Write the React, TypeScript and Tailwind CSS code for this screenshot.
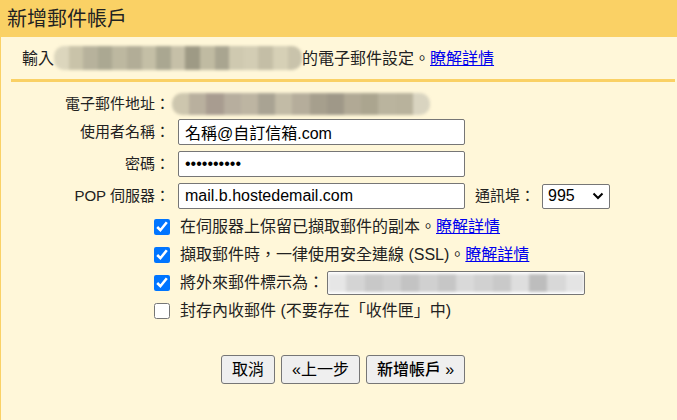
import React from "react";

function Blur({ className, colors }: { className: string; colors: string[] }) {
  return (
    <div className={"relative shrink-0 " + className}>
      <div className="absolute inset-0 flex overflow-hidden rounded-[10px] blur-[1.5px]">
        {colors.map((c, i) => (
          <div key={i} className="h-full flex-1" style={{ background: c }} />
        ))}
      </div>
    </div>
  );
}

const infoColors = [
  "#dcd6bd", "#c9c3a9", "#b7b29c", "#aba892", "#bdb8a0", "#b2ad97", "#c4bfa6", "#aaa791",
  "#c6c0a8", "#9e9a85", "#c0bba2", "#a9a590", "#cfc9b0", "#d3cdb4", "#c4bea6", "#d6d0b6", "#c9c3ab",
];
const emailColors = [
  "#cdc6ae", "#b9b09e", "#a89c90", "#b7ae9e", "#bdb5a2", "#a9a393", "#c2bba6", "#b5ad9b", "#a69f8d",
  "#9f9888", "#b1a995", "#aba58f", "#bab49e", "#b8b29c", "#d9d4c0",
];
const labelColors = [
  "#e6e6e6", "#d4d4d4", "#c8c8c8", "#cfcfcf", "#c3c3c3", "#d0d0d0", "#c6c6c6", "#d9d9d9", "#d1d1d1",
  "#c9c9c9", "#dedede", "#bdbdbd", "#d8d8d8", "#e4e4e4",
];

const inputCls =
  "h-[26px] w-[287px] rounded-[2px] border border-[#767676] bg-white px-[6px] text-[16px] leading-[20px] text-black outline-none";

function Check({ checked, children }: { checked: boolean; children: React.ReactNode }) {
  return (
    <div className="flex h-[28px] items-center pl-[153px]">
      <input type="checkbox" defaultChecked={checked} className="m-0 h-4 w-4 shrink-0" />
      <div className="ml-[10px] flex items-center text-[16px] leading-[20px]">{children}</div>
    </div>
  );
}

export default function App() {
  return (
    <div className="flex h-[420px] w-[677px] flex-col overflow-hidden bg-[#fff7d9] font-['Liberation_Sans','Noto_Sans_CJK_TC',sans-serif] text-[#222]">
      <div className="flex h-[37px] shrink-0 items-center bg-[#fad165] pl-[7px] text-[20px] leading-none">
        新增郵件帳戶
      </div>
      <div className="flex flex-1 flex-col border-l border-[#fad165]">
        <div className="ml-[10px] mr-[2px] flex h-[45px] items-center border-b-[3px] border-[#fad165] pl-[11px] text-[16px] leading-[21px]">
          <span>輸入</span>
          <Blur className="h-[24px] w-[248px]" colors={infoColors} />
          <span>的電子郵件設定。</span>
          <a className="text-[#0000ee] underline">瞭解詳情</a>
        </div>

        <div className="mt-[9px] flex h-[26px] items-center leading-[20px]">
          <div className="w-[169px] text-right text-[15px]">電子郵件地址：</div>
          <Blur className="ml-[2px] h-[22px] w-[258px]" colors={emailColors} />
        </div>
        <div className="mt-[2px] flex h-[26px] items-center leading-[20px]">
          <div className="w-[169px] text-right text-[15px]">使用者名稱：</div>
          <input readOnly className={"ml-[8px] " + inputCls} defaultValue="名稱@自訂信箱.com" />
        </div>
        <div className="mt-[6px] flex h-[26px] items-center leading-[20px]">
          <div className="w-[169px] text-right text-[15px]">密碼：</div>
          <input readOnly type="password" className={"ml-[8px] " + inputCls} defaultValue="abcdefghij" />
        </div>
        <div className="mt-[6px] flex h-[26px] items-center leading-[20px]">
          <div className="w-[169px] text-right text-[15px]">POP 伺服器：</div>
          <input readOnly className={"ml-[8px] " + inputCls} defaultValue="mail.b.hostedemail.com" />
          <div className="ml-[10px] text-[15px]">通訊埠：</div>
          <div className="ml-[7px] flex h-[25px] w-[68px] items-center justify-between rounded-[2px] border border-[#767676] bg-white pl-[5px] pr-[5px] text-[16px] text-black">
            <span>995</span>
            <svg width="12" height="8" viewBox="0 0 12 8" fill="none">
              <path d="M1.5 1.5 L6 6 L10.5 1.5" stroke="#000" strokeWidth="2" />
            </svg>
          </div>
        </div>

        <div className="mt-[4px] flex flex-col">
          <Check checked>
            <span>在伺服器上保留已擷取郵件的副本。</span>
            <a className="text-[#0000ee] underline">瞭解詳情</a>
          </Check>
          <Check checked>
            <span>擷取郵件時，一律使用安全連線 (SSL)。</span>
            <a className="text-[#0000ee] underline">瞭解詳情</a>
          </Check>
          <Check checked>
            <span>將外來郵件標示為：</span>
            <div className="ml-[3px] flex h-[24px] w-[258px] items-center overflow-hidden rounded-[2px] border border-[#767676] bg-white py-[2px]">
              <div className="flex h-full w-full blur-[1.5px]">
                {labelColors.map((c, i) => (
                  <div key={i} className="h-full flex-1" style={{ background: c }} />
                ))}
              </div>
            </div>
          </Check>
          <Check checked={false}>
            <span>封存內收郵件 (不要存在「收件匣」中)</span>
          </Check>
        </div>

        <div className="mt-[30px] flex gap-[6px] pl-[220px]">
          <button className="h-[29px] rounded-[3px] border border-[#767676] bg-[#efefef] px-[10px] text-[16px] text-black">
            取消
          </button>
          <button className="h-[29px] rounded-[3px] border border-[#767676] bg-[#efefef] px-[10px] text-[16px] text-black">
            «上一步
          </button>
          <button className="h-[29px] rounded-[3px] border border-[#767676] bg-[#efefef] px-[10px] text-[16px] font-medium text-black">
            新增帳戶 »
          </button>
        </div>
      </div>
    </div>
  );
}
